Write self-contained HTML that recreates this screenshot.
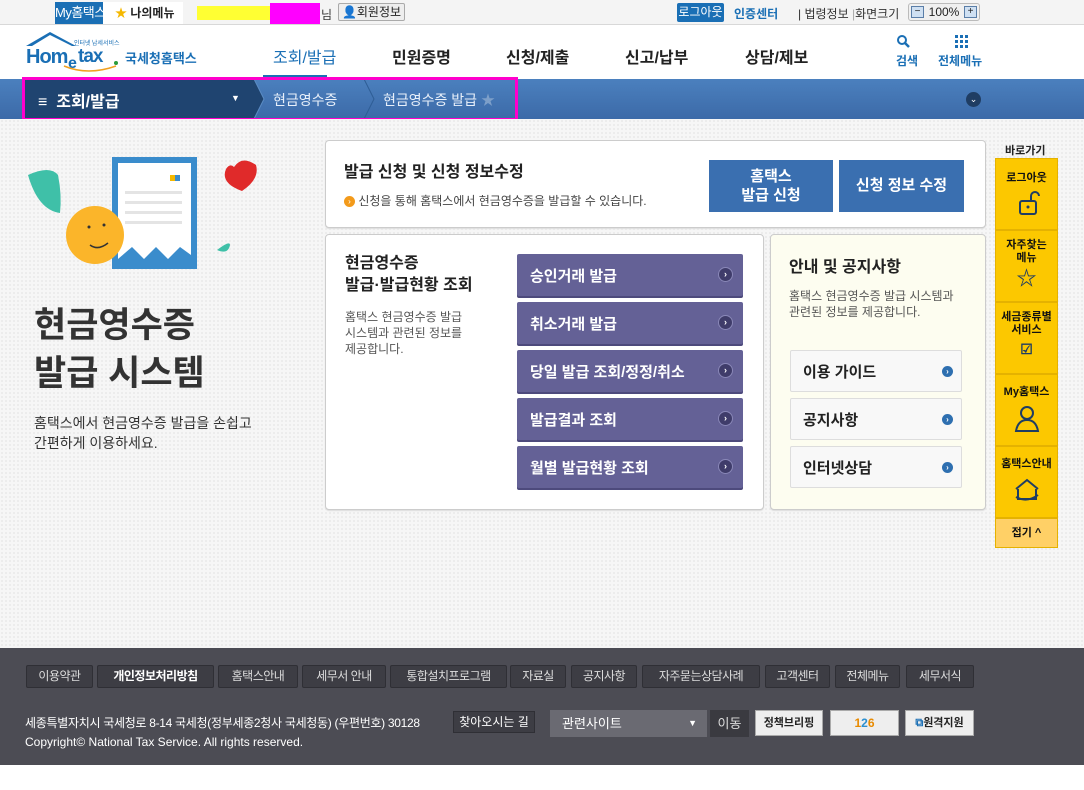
<!DOCTYPE html>
<html><head><meta charset="utf-8"><style>
*{margin:0;padding:0;box-sizing:border-box}
body{width:1084px;height:790px;overflow:hidden;font-family:"Liberation Sans","Noto Sans CJK KR",sans-serif;background:#fff;position:relative;color:#222}
.a{position:absolute}
.top{left:0;top:0;width:1084px;height:25px;background:#f4f4f4;border-bottom:1px solid #d8d8d8}
.hdr{top:25px;left:0;width:1084px;height:54px;background:#fff}
.nav{top:44px;font-size:16px;font-weight:bold;color:#222}
.bar{top:79px;left:0;width:1084px;height:40px;background:linear-gradient(#4b80be,#3c6aa8)}
.main{top:119px;left:0;width:1084px;height:529px;background:#f6f6f6;background-image:radial-gradient(#e9e9e9 0.8px,transparent 0.8px);background-size:4px 4px}
.box{background:#fff;border:1px solid #ccc;border-radius:4px;box-shadow:0 1px 1px #ddd}
.pb{left:517px;width:226px;height:42px;background:#646196;border-radius:2px;color:#fff;font-size:15px;font-weight:bold;padding:11px 0 0 13px;box-shadow:0 2px 0 #4d4a7c}
.pb i,.gb i{position:absolute;right:10px;top:13px;width:15px;height:15px;border-radius:50%;background:#3f3c6a;border:1px solid #8a88b8;color:#fff;font-style:normal;font-size:9px;text-align:center;line-height:13px}
.gb{left:790px;width:172px;height:42px;background:#f8f8f8;border:1px solid #ddd;border-radius:2px;font-size:15px;font-weight:bold;padding:10px 0 0 12px;color:#222}
.gb i{background:#2e6fb0;border:none;width:11px;height:11px;line-height:11px;font-size:8px;top:15px;right:8px}
.side{left:995px;width:63px;background:#fcc800;border:1px solid #e5b200;text-align:center;font-size:11px;font-weight:bold;color:#111}
.foot{left:0;top:648px;width:1084px;height:117px;background:#4c4c54}
.fl{position:absolute;top:665px;height:23px;border:1px solid #2f2f35;background:#3d3d44;color:#ddd;font-size:12px;line-height:21px;text-align:center;border-radius:2px;letter-spacing:-0.5px;white-space:nowrap;overflow:hidden}
</style></head><body>
<div class="a top"></div>
<div class="a" style="left:55px;top:2px;width:48px;height:22px;background:#1a6fb5;color:#fff;font-size:13px;line-height:22px;text-align:center;letter-spacing:-0.5px;white-space:nowrap">My홈택스</div>
<div class="a" style="left:103px;top:2px;width:80px;height:22px;background:#fff;font-size:12px;line-height:22px;padding-left:12px;font-weight:bold"><span style="color:#f5b800">★</span> 나의메뉴</div>
<div class="a" style="left:197px;top:6px;width:73px;height:14px;background:#ffff33"></div>
<div class="a" style="left:270px;top:3px;width:50px;height:21px;background:#ff00ff"></div>
<div class="a" style="left:321px;top:6px;font-size:12px;color:#333">님</div>
<div class="a" style="left:338px;top:3px;width:67px;height:18px;border:1px solid #aaa;background:#eee;font-size:12px;line-height:16px;text-align:center;border-radius:2px">👤회원정보</div>
<div class="a" style="left:677px;top:3px;width:47px;height:19px;background:#1a6fb5;color:#fff;font-size:12px;line-height:19px;text-align:center;border-radius:2px">로그아웃</div>
<div class="a" style="left:734px;top:5px;font-size:12px;color:#1a6fb5;font-weight:bold">인증센터</div>
<div class="a" style="left:798px;top:5px;font-size:12px;color:#333">| 법령정보 <span style="color:#aaa">|</span>화면크기</div>
<div class="a" style="left:908px;top:3px;width:72px;height:18px;border:1px solid #bbb;border-radius:3px;background:#f0f0f0;font-size:12px;line-height:16px;text-align:center">
<span style="position:absolute;left:2px;top:2px;width:13px;height:12px;border:1px solid #5a7ea8;background:#cfe0f2;font-size:10px;line-height:10px">−</span>100%<span style="position:absolute;right:2px;top:2px;width:13px;height:12px;border:1px solid #5a7ea8;background:#cfe0f2;font-size:10px;line-height:10px">+</span></div>
<div class="a hdr"></div>
<svg class="a" style="left:24px;top:30px" width="100" height="42" viewBox="0 0 100 42"><path d="M2 16 L26 2 L52 16 L48 16 L26 5 L8 16Z" fill="#1a6fb5"/><text x="2" y="33" font-family="Liberation Sans" font-weight="bold" font-size="20" fill="#1a6fb5" letter-spacing="-1">Hom</text><text x="44" y="38" font-family="Liberation Sans" font-weight="bold" font-size="16" fill="#1a6fb5">e</text><text x="54" y="32" font-family="Liberation Sans" font-weight="bold" font-size="19" fill="#1a6fb5" letter-spacing="-1">tax</text><circle cx="92" cy="33" r="2" fill="#2a9c3c"/><path d="M40 36 Q64 46 92 36" stroke="#f0a020" stroke-width="1.5" fill="none"/><text x="50" y="15" font-size="6" fill="#1a6fb5" font-family="Noto Sans CJK KR">인터넷 납세서비스</text></svg>
<div class="a" style="left:125px;top:48px;font-size:13px;font-weight:bold;color:#1a6fb5">국세청홈택스</div>
<div class="a nav" style="left:273px;color:#1a6fb5;font-weight:normal">조회/발급</div>
<div class="a" style="left:263px;top:75px;width:64px;height:2px;background:#1a6fb5"></div>
<div class="a nav" style="left:392px">민원증명</div>
<div class="a nav" style="left:506px">신청/제출</div>
<div class="a nav" style="left:625px">신고/납부</div>
<div class="a nav" style="left:745px">상담/제보</div>
<svg class="a" style="left:896px;top:34px" width="16" height="16"><circle cx="6" cy="6" r="4" stroke="#1a6fb5" stroke-width="2" fill="none"/><path d="M9 9 L13 13" stroke="#1a6fb5" stroke-width="2.5"/></svg>
<div class="a" style="left:896px;top:52px;font-size:12px;color:#1a6fb5;font-weight:bold">검색</div>
<svg class="a" style="left:955px;top:35px" width="14" height="14" fill="#1a6fb5"><rect x="0" y="0" width="3" height="3"/><rect x="5" y="0" width="3" height="3"/><rect x="10" y="0" width="3" height="3"/><rect x="0" y="5" width="3" height="3"/><rect x="5" y="5" width="3" height="3"/><rect x="10" y="5" width="3" height="3"/><rect x="0" y="10" width="3" height="3"/><rect x="5" y="10" width="3" height="3"/><rect x="10" y="10" width="3" height="3"/></svg>
<div class="a" style="left:938px;top:52px;font-size:12px;color:#1a6fb5;font-weight:bold">전체메뉴</div>
<div class="a bar"></div>
<svg class="a" style="left:24px;top:79px" width="495" height="40"><path d="M0 0H230L240 20L230 40H0Z" fill="#1f4470"/><path d="M340 0L350 20L340 40" stroke="#2e5d95" fill="none"/><path d="M230 0L240 20L230 40" stroke="#5b8cc4" fill="none"/></svg>
<div class="a" style="left:22px;top:77px;width:496px;height:44px;border:3px solid #ff00cc"></div>
<div class="a" style="left:38px;top:88px;color:#fff;font-size:16px;font-weight:bold">≡&nbsp; 조회/발급</div>
<div class="a" style="left:231px;top:93px;color:#fff;font-size:9px">▼</div>
<div class="a" style="left:273px;top:90px;color:#e8f0fa;font-size:14px">현금영수증</div>
<div class="a" style="left:383px;top:90px;color:#e8f0fa;font-size:14px">현금영수증 발급 <span style="color:#7d9fc9">★</span></div>
<div class="a" style="left:966px;top:92px;width:15px;height:15px;border-radius:50%;background:#1f3d63;color:#fff;font-size:9px;text-align:center;line-height:15px">⌄</div>
<div class="a main"></div>
<svg class="a" style="left:20px;top:155px" width="250" height="135"><path d="M8 20 Q30 10 38 20 Q42 40 40 58 Q18 55 8 20Z" fill="#3fc0a8"/><rect x="92" y="2" width="85" height="112" fill="#3a8ccc"/><path d="M98 8H171V100L160 92 148 104 136 92 124 104 112 92 98 104Z" fill="#fff"/><rect x="150" y="20" width="5" height="6" fill="#f5b800"/><rect x="155" y="20" width="5" height="6" fill="#3a8ccc"/><g fill="#e4e4e4"><rect x="105" y="36" width="57" height="3"/><rect x="105" y="46" width="57" height="3"/><rect x="105" y="56" width="57" height="3"/><rect x="105" y="66" width="57" height="3"/></g><circle cx="75" cy="80" r="29" fill="#fbb52a"/><path d="M70 90 Q78 96 88 88" stroke="#333" stroke-width="1.5" fill="none"/><circle cx="69" cy="72" r="1.5" fill="#333"/><circle cx="84" cy="70" r="1.5" fill="#333"/><path d="M214 12 Q222 0 236 10 Q240 24 222 36 Q200 28 206 14 Q210 8 214 12Z" fill="#e02a2a"/><path d="M197 95 Q210 85 210 90 Q208 100 197 95Z" fill="#3fc0a8"/></svg>
<div class="a" style="left:34px;top:302px;font-size:35px;font-weight:bold;color:#333;line-height:48px">현금영수증<br>발급 시스템</div>
<div class="a" style="left:34px;top:413px;font-size:14px;color:#333;line-height:20px">홈택스에서 현금영수증 발급을 손쉽고<br>간편하게 이용하세요.</div>
<div class="a box" style="left:325px;top:140px;width:661px;height:88px"></div>
<div class="a" style="left:344px;top:158px;font-size:16px;font-weight:bold">발급 신청 및 신청 정보수정</div>
<div class="a" style="left:344px;top:192px;font-size:12px;color:#444"><span style="display:inline-block;width:11px;height:11px;border-radius:50%;background:#f39a1a;color:#fff;font-size:8px;text-align:center;line-height:11px;vertical-align:1px">›</span> 신청을 통해 홈택스에서 현금영수증을 발급할 수 있습니다.</div>
<div class="a" style="left:709px;top:160px;width:124px;height:52px;background:#3a6fb0;color:#fff;font-size:15px;font-weight:bold;text-align:center;line-height:19px;padding-top:7px">홈택스<br>발급 신청</div>
<div class="a" style="left:839px;top:160px;width:125px;height:52px;background:#3a6fb0;color:#fff;font-size:15px;font-weight:bold;text-align:center;line-height:52px">신청 정보 수정</div>
<div class="a box" style="left:325px;top:234px;width:439px;height:276px"></div>
<div class="a" style="left:345px;top:253px;font-size:16px;font-weight:bold;line-height:22px">현금영수증<br>발급·발급현황 조회</div>
<div class="a" style="left:345px;top:309px;font-size:12px;color:#555;line-height:16px">홈택스 현금영수증 발급<br>시스템과 관련된 정보를<br>제공합니다.</div>
<div class="a pb" style="top:254px">승인거래 발급<i>›</i></div>
<div class="a pb" style="top:302px">취소거래 발급<i>›</i></div>
<div class="a pb" style="top:350px">당일 발급 조회/정정/취소<i>›</i></div>
<div class="a pb" style="top:398px">발급결과 조회<i>›</i></div>
<div class="a pb" style="top:446px">월별 발급현황 조회<i>›</i></div>
<div class="a box" style="left:770px;top:234px;width:216px;height:276px;background:#fdfdf0"></div>
<div class="a" style="left:789px;top:253px;font-size:16px;font-weight:bold">안내 및 공지사항</div>
<div class="a" style="left:789px;top:288px;font-size:12px;color:#555;line-height:16px">홈택스 현금영수증 발급 시스템과<br>관련된 정보를 제공합니다.</div>
<div class="a gb" style="top:350px">이용 가이드<i>›</i></div>
<div class="a gb" style="top:398px">공지사항<i>›</i></div>
<div class="a gb" style="top:446px">인터넷상담<i>›</i></div>
<div class="a" style="left:1005px;top:142px;font-size:11px;font-weight:bold;color:#222">바로가기</div>
<div class="a side" style="top:158px;height:72px;padding-top:10px">로그아웃<br><svg width="30" height="30" style="margin-top:4px"><rect x="8" y="12" width="16" height="13" rx="2" fill="none" stroke="#1f3d63" stroke-width="2"/><path d="M19 12V7a4 4 0 0 1 8 0" stroke="#1f3d63" stroke-width="2" fill="none"/><circle cx="16" cy="18" r="1.5" fill="#1f3d63"/></svg></div>
<div class="a side" style="top:230px;height:72px;padding-top:8px;line-height:13px">자주찾는<br>메뉴<br><span style="font-size:20px;color:#1f3d63;line-height:28px">☆</span></div>
<div class="a side" style="top:302px;height:72px;padding-top:8px;line-height:13px">세금종류별<br>서비스<br><span style="font-size:14px;color:#1f3d63;line-height:24px">☑</span></div>
<div class="a side" style="top:374px;height:72px;padding-top:8px">My홈택스<br><svg width="26" height="28" style="margin-top:6px"><circle cx="13" cy="8" r="6" fill="none" stroke="#1f3d63" stroke-width="2"/><path d="M2 26 Q4 15 13 15 Q22 15 24 26Z" fill="none" stroke="#1f3d63" stroke-width="2"/></svg></div>
<div class="a side" style="top:446px;height:72px;padding-top:8px">홈택스안내<br><svg width="30" height="30" style="margin-top:6px"><path d="M4 12 L15 3 L26 12" fill="none" stroke="#1f3d63" stroke-width="2"/><path d="M6 12V22H24V12" fill="none" stroke="#1f3d63" stroke-width="2"/><path d="M4 20 Q15 26 26 18" stroke="#1f3d63" stroke-width="2" fill="none"/></svg></div>
<div class="a side" style="top:518px;height:30px;background:#ffd066;line-height:28px">접기 ^</div>
<div class="a foot"></div>
<div class="fl" style="left:26px;width:67px">이용약관</div>
<div class="fl" style="left:97px;width:117px;color:#fff;font-weight:bold">개인정보처리방침</div>
<div class="fl" style="left:218px;width:80px">홈택스안내</div>
<div class="fl" style="left:302px;width:84px">세무서 안내</div>
<div class="fl" style="left:390px;width:117px">통합설치프로그램</div>
<div class="fl" style="left:510px;width:56px">자료실</div>
<div class="fl" style="left:571px;width:66px">공지사항</div>
<div class="fl" style="left:642px;width:118px">자주묻는상담사례</div>
<div class="fl" style="left:765px;width:65px">고객센터</div>
<div class="fl" style="left:835px;width:65px">전체메뉴</div>
<div class="fl" style="left:906px;width:68px">세무서식</div>
<div class="a" style="left:25px;top:714px;font-size:12px;color:#fff;letter-spacing:-0.3px">세종특별자치시 국세청로 8-14 국세청(정부세종2청사 국세청동) (우편번호) 30128</div>
<div class="a" style="left:453px;top:711px;width:82px;height:22px;border:1px solid #2f2f35;background:#3d3d44;color:#fff;font-size:12px;line-height:20px;text-align:center">찾아오시는 길</div>
<div class="a" style="left:25px;top:735px;font-size:12px;color:#fff">Copyright© National Tax Service. All rights reserved.</div>
<div class="a" style="left:550px;top:710px;width:157px;height:27px;background:#6a6a72;color:#fff;font-size:13px;line-height:27px;padding-left:12px">관련사이트<span style="position:absolute;right:10px;font-size:9px">▼</span></div>
<div class="a" style="left:710px;top:710px;width:39px;height:27px;background:#3a3a40;color:#ddd;font-size:13px;line-height:27px;text-align:center">이동</div>
<div class="a" style="left:755px;top:710px;width:68px;height:26px;background:#eee;border:1px solid #aaa;font-size:11px;line-height:24px;text-align:center;font-weight:bold">정책브리핑</div>
<div class="a" style="left:830px;top:710px;width:69px;height:26px;background:#eee;border:1px solid #aaa;font-size:12px;line-height:24px;text-align:center;color:#e88a00;font-weight:bold">1<span style="color:#2a8fd0">2</span>6</div>
<div class="a" style="left:905px;top:710px;width:69px;height:26px;background:#eee;border:1px solid #aaa;font-size:11px;line-height:24px;text-align:center;font-weight:bold"><span style="color:#1a6fb5">⧉</span>원격지원</div>
</body></html>
